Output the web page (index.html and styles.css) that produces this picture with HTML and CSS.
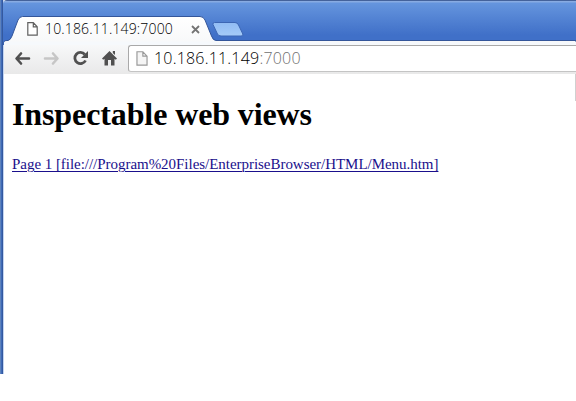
FILE: index.html
```html
<!DOCTYPE html>
<html lang="en">
<head>
<meta charset="utf-8">
<title>Inspectable web views</title>
<link rel="stylesheet" href="styles.css">
</head>
<body>
<div class="window">
  <header class="tabstrip">
    <svg class="tab-shape" width="576" height="45" viewBox="0 0 576 45">
      <defs>
        <linearGradient id="tabfill" x1="0" y1="0" x2="0" y2="1"><stop offset="0" stop-color="#fff"/><stop offset="1" stop-color="#f7f8f9"/></linearGradient>
        <linearGradient id="newtab" x1="0" y1="0" x2="0" y2="1"><stop offset="0" stop-color="#91bcf4"/><stop offset="1" stop-color="#a5cbf8"/></linearGradient>
      </defs>
      <path d="M4 45V42Q4 40.500 7 40.500H8Q10.500 40 12 36L18 20Q19.500 16.500 22.500 16.500H200Q203.500 16.500 205 20L211.500 36Q213 40.500 216 40.500H576V45Z" fill="url(#tabfill)" stroke="#34569a"/>
      <path d="M4 45V42.500Q4 41.500 7 41.500H214L217 42H576V45Z" fill="#f6f9fc"/>
      <path d="M214.500 22.500H235Q237.500 22.500 238.500 25L242.800 34Q243.500 36 241 36H221Q218.500 36 217.500 34L213 24.500Q212.500 22.500 214.500 22.500Z" fill="url(#newtab)" stroke="#3c66b4"/>
    </svg>
    <div class="tab">
      <svg class="page-icon" width="11" height="14" viewBox="0 0 11 14"><path d="M.8.700H6.300L10.200 4.800V13.200H.8ZM6.300.700V4.800H10.200" fill="#fff" stroke="#606060" stroke-width="1.200"/></svg>
      <span class="tab-title">10.186.11.149:7000</span>
      <svg class="close" width="9" height="9" viewBox="0 0 9 9"><path d="M1 1L8 8M8 1L1 8" stroke="#747474" stroke-width="1.800"/></svg>
    </div>
  </header>
  <nav class="toolbar">
    <svg class="controls" width="128" height="29" viewBox="0 0 128 29">
      <g fill="none" stroke-width="2.600" stroke-linecap="round" stroke-linejoin="round">
        <path d="M21 8.500L16.500 13.500L21 18.500M17 13.500H29" stroke="#505050"/>
        <path d="M53 8.500L57.500 13.500L53 18.500M45 13.500H57" stroke="#c6c6c6"/>
      </g>
      <path d="M84.800 9.500A5.600 5.600 0 1 0 85.500 15.500" fill="none" stroke="#505050" stroke-width="2.800"/>
      <path d="M88 6V13H81Z" fill="#505050"/>
      <path d="M109.500 6L117 13.500L115.800 14.800L114.500 13.700V20.500H111V15H108V20.500H104.500V13.700L103.200 14.800L102 13.500ZM112.800 6H115V10L112.800 8Z" fill="#505050"/>
    </svg>
    <div class="omnibox">
      <svg class="page-icon" width="12" height="15" viewBox="0 0 11 14"><path d="M.8.700H6.300L10.200 4.800V13.200H.8ZM6.300.700V4.800H10.200" fill="#f5f5f5" stroke="#999" stroke-width="1.100"/></svg>
      <span class="url">10.186.11.149<span class="port">:7000</span></span>
    </div>
  </nav>
  <main>
    <h1>Inspectable web views</h1>
    <a href="#">Page 1 [file:///Program%20Files/EnterpriseBrowser/HTML/Menu.htm]</a>
    <div class="edge"></div>
  </main>
</div>
</body>
</html>
```
FILE: styles.css
```css
* { box-sizing: border-box; }
body { margin: 0; background: #fff; overflow: hidden; }
svg { display: block; flex: none; }
.window {
  position: relative;
  width: 576px;
  height: 374px;
  border-left: 4px solid #3f68b8;
  border-image: linear-gradient(90deg, #5f83bd 0 1px, #3f6bb8 1px 2px, #34599f 2px 3px, #c3d5f2 3px 4px) 0 0 0 4;
}
.tabstrip {
  position: relative;
  height: 45px;
  padding-top: 16px;
  margin-left: -1px;
  border-radius: 4px 0 0 0;
  background: linear-gradient(#44629b 0 1px, #88abe2 1px 2px, #6595de 3px, #4070c8 35px);
}
.tab-shape { position: absolute; left: -3px; top: 0; }
.tab {
  position: relative;
  display: flex;
  align-items: center;
  height: 26px;
  width: 199px;
  padding-left: 24px;
}
.tab-title {
  margin-left: 7px;
  width: 146px;
  font: 300 14px/20px "Open Sans", "Noto Sans", sans-serif;
  letter-spacing: .15px;
  color: #000;
  white-space: nowrap;
}
.toolbar {
  display: flex;
  height: 29px;
  background: linear-gradient(#f7f8f9, #e9e9e9);
}
.controls { margin-left: -4px; }
.omnibox {
  display: flex;
  align-items: center;
  flex: 1;
  height: 27px;
  padding-left: 7px;
  border: 1px solid #a9a9a9;
  border-bottom-color: #c4c4c4;
  border-right: 0;
  border-radius: 3px 0 0 3px;
  background: #fff;
}
.url {
  margin: -2px 0 0 6px;
  font: 300 16px/22px "Open Sans", "Noto Sans", sans-serif;
  letter-spacing: .2px;
  color: #000;
}
.port { color: #707070; }
main {
  position: relative;
  padding: 21px 8px 0;
  font: 15px/20px "Liberation Serif", serif;
  letter-spacing: -.035px;
}
h1 { margin: 0 0 21px; font-size: 32px; line-height: 38px; letter-spacing: -.11px; color: #000; white-space: nowrap; }
a { color: #1a0f8c; white-space: nowrap; text-underline-offset: 2px; text-decoration-thickness: 1px; }
.edge { position: absolute; top: 0; right: 0; width: 1px; height: 27px; background: #d0d0d0; }
```
